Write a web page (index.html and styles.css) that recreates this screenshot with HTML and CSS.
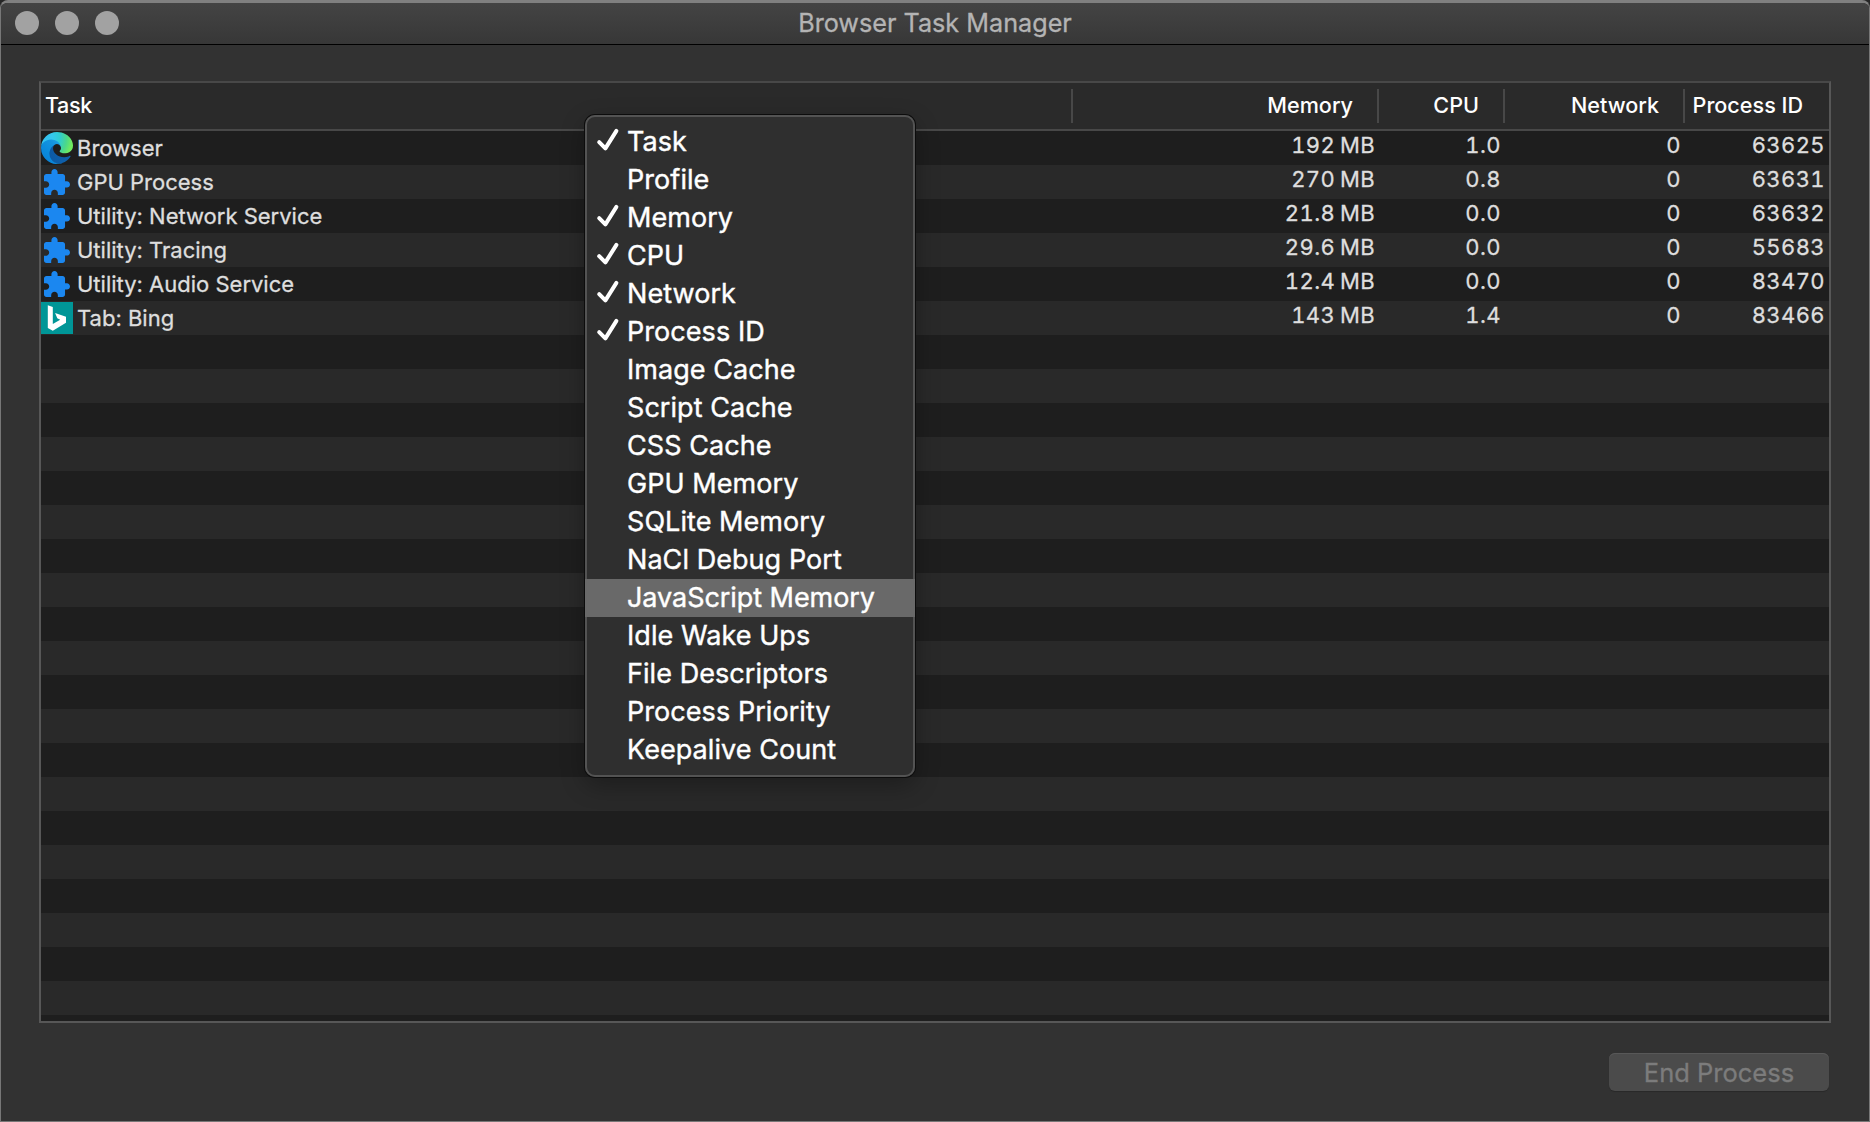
FILE: index.html
```html
<!DOCTYPE html>
<html lang="en">
<head>
<meta charset="utf-8">
<title>Browser Task Manager</title>
<link rel="stylesheet" href="styles.css">
</head>
<body>
<svg class="defs" aria-hidden="true">
  <symbol id="puzzle" viewBox="-0.42 -1.42 25.85 25.85">
    <path fill="#1b87f0" d="M20.5 11H19V7c0-1.1-.9-2-2-2h-4V3.5C13 2.12 11.88 1 10.5 1S8 2.12 8 3.5V5H4c-1.1 0-1.99.9-1.99 2v3.8H3.5c1.49 0 2.7 1.21 2.7 2.7s-1.21 2.7-2.7 2.7H2V20c0 1.1.9 2 2 2h3.8v-1.5c0-1.49 1.21-2.7 2.7-2.7 1.49 0 2.7 1.21 2.7 2.7V22H17c1.1 0 2-.9 2-2v-4h1.5c1.38 0 2.5-1.12 2.5-2.5S21.88 11 20.5 11z"/>
  </symbol>
  <symbol id="check" viewBox="0 0 24 24">
    <path fill="none" stroke="#fff" stroke-width="4" stroke-linecap="round" stroke-linejoin="round" d="M3.2 14.2 9.4 20.4 20.4 2.9"/>
  </symbol>
</svg>
<div class="window">
  <header class="titlebar">
    <div class="lights"><span class="light"></span><span class="light"></span><span class="light"></span></div>
    <h1 class="title">Browser Task Manager</h1>
  </header>
  <main class="content">
    <div class="table">
      <div class="head">
        <div class="th th-task">Task</div>
        <div class="th">Memory</div>
        <div class="th">CPU</div>
        <div class="th">Network</div>
        <div class="th">Process ID</div>
      </div>
      <div class="body">
        <div class="row">
          <div class="task">
            <svg class="icon" viewBox="0 0 256 256">
              <defs>
                <linearGradient id="e1" gradientUnits="userSpaceOnUse" x1="63" y1="177" x2="241" y2="177"><stop offset="0" stop-color="#0c59a4"/><stop offset="1" stop-color="#0f62ad"/></linearGradient>
                <linearGradient id="e2" gradientUnits="userSpaceOnUse" x1="153" y1="100" x2="46" y2="222"><stop offset="0" stop-color="#1b9de2"/><stop offset=".16" stop-color="#1595df"/><stop offset=".67" stop-color="#0a8bdc"/><stop offset="1" stop-color="#0a84d8"/></linearGradient>
                <radialGradient id="e3" gradientUnits="userSpaceOnUse" cx="26" cy="45" r="225"><stop offset="0" stop-color="#35c1f1"/><stop offset=".3" stop-color="#34c8ed"/><stop offset=".55" stop-color="#2fccd2"/><stop offset=".8" stop-color="#4bd88a"/><stop offset="1" stop-color="#70eb60"/></radialGradient>
              </defs>
              <path fill="url(#e1)" d="M231 190.5c-3.4 1.8-6.9 3.4-10.5 4.7a101 101 0 01-35.9 6.4c-47.3 0-88.5-32.5-88.5-74.3a31.5 31.5 0 0116.4-27.3c-42.8 1.8-53.8 46.4-53.8 72.5 0 74 68.1 81.4 82.8 81.4 7.9 0 19.8-2.3 27-4.6l1.3-.4a128.3 128.3 0 0066.6-52.8 4 4 0 00-5.4-5.6z"/>
              <path fill="url(#e2)" d="M105.7 241.4a79.2 79.2 0 01-22.7-21.3 80.7 80.7 0 0129.5-120c3.2-1.5 8.5-4.1 15.6-4a32.4 32.4 0 0125.7 13 31.9 31.9 0 016.3 18.7c0-.2 24.5-79.6-80-79.6-43.9 0-80 41.6-80 78.2a130.2 130.2 0 0012.1 56 128 128 0 00156.4 67 75.5 75.5 0 01-62.8-8z"/>
              <path fill="url(#e3)" d="M152.3 148.9c-.8 1-3.3 2.5-3.3 5.7 0 2.6 1.7 5.1 4.7 7.2 14.4 10 41.5 8.7 41.6 8.7 10.7 0 21.1-2.9 30.3-8.3A61.4 61.4 0 00256 109.1c.3-22.4-8-37.3-11.3-43.9C223.5 23.9 177.7 0 128 0A128 128 0 000 126.2c.5-36.5 36.8-66 80-66 3.5 0 23.5.3 42 10.1 16.3 8.6 24.9 18.9 30.8 29.2 6.2 10.7 7.3 24.1 7.3 29.5 0 5.3-2.7 13.3-7.8 19.9z"/>
            </svg>
            <span>Browser</span>
          </div>
          <div class="num">192 MB</div><div class="num">1.0</div><div class="num">0</div><div class="num">63625</div>
        </div>
        <div class="row">
          <div class="task"><svg class="icon"><use href="#puzzle"/></svg><span>GPU Process</span></div>
          <div class="num">270 MB</div><div class="num">0.8</div><div class="num">0</div><div class="num">63631</div>
        </div>
        <div class="row">
          <div class="task"><svg class="icon"><use href="#puzzle"/></svg><span>Utility: Network Service</span></div>
          <div class="num">21.8 MB</div><div class="num">0.0</div><div class="num">0</div><div class="num">63632</div>
        </div>
        <div class="row">
          <div class="task"><svg class="icon"><use href="#puzzle"/></svg><span>Utility: Tracing</span></div>
          <div class="num">29.6 MB</div><div class="num">0.0</div><div class="num">0</div><div class="num">55683</div>
        </div>
        <div class="row">
          <div class="task"><svg class="icon"><use href="#puzzle"/></svg><span>Utility: Audio Service</span></div>
          <div class="num">12.4 MB</div><div class="num">0.0</div><div class="num">0</div><div class="num">83470</div>
        </div>
        <div class="row">
          <div class="task">
            <svg class="icon" viewBox="0 0 32 32"><rect width="32" height="32" fill="#009697"/><path fill="#fff" d="M6.8 3.2 11.8 5v17l7.4-4.3-2.9-1.4-2.2-5.3L25 14.8v6L11.8 28.8 6.8 25.9z"/></svg>
            <span>Tab: Bing</span>
          </div>
          <div class="num">143 MB</div><div class="num">1.4</div><div class="num">0</div><div class="num">83466</div>
        </div>
      </div>
    </div>
    <button class="end" disabled>End Process</button>
  </main>
  <ul class="menu">
    <li><svg class="check"><use href="#check"/></svg>Task</li>
    <li>Profile</li>
    <li><svg class="check"><use href="#check"/></svg>Memory</li>
    <li><svg class="check"><use href="#check"/></svg>CPU</li>
    <li><svg class="check"><use href="#check"/></svg>Network</li>
    <li><svg class="check"><use href="#check"/></svg>Process ID</li>
    <li>Image Cache</li>
    <li>Script Cache</li>
    <li>CSS Cache</li>
    <li>GPU Memory</li>
    <li>SQLite Memory</li>
    <li>NaCl Debug Port</li>
    <li class="active">JavaScript Memory</li>
    <li>Idle Wake Ups</li>
    <li>File Descriptors</li>
    <li>Process Priority</li>
    <li>Keepalive Count</li>
  </ul>
</div>
</body>
</html>
```
FILE: styles.css
```css
* { box-sizing: border-box; }

body {
  margin: 0;
  background: #262626;
  font-family: Inter, "Liberation Sans", sans-serif;
}

.defs { display: none; }

.window {
  position: relative;
  display: flex;
  flex-direction: column;
  width: 1870px;
  height: 1122px;
  border: 1px solid #777;
  border-top: 3px solid #808080;
  border-radius: 8px 8px 0 0;
  background: #323232;
  overflow: hidden;
}

.titlebar {
  display: grid;
  grid-template-columns: 1fr auto 1fr;
  align-items: center;
  flex: none;
  height: 42px;
  padding: 0 14px;
  border-bottom: 1px solid #000;
  background: linear-gradient(#444, #373737);
}

.lights { display: flex; gap: 16px; margin-top: -1px; }
.light { width: 24px; height: 24px; border-radius: 50%; background: #a2a2a2; }

.title {
  margin: 0;
  color: #b4b4b4;
  font-size: 25.2px;
  font-weight: 400;
  line-height: 41px;
  -webkit-text-stroke: 0.3px;
}

.content {
  display: flex;
  flex-direction: column;
  flex: 1;
  align-items: flex-end;
  gap: 30px;
  padding: 36px 38px 0;
}

.table {
  display: flex;
  flex-direction: column;
  width: 1792px;
  height: 942px;
  border: 2px solid #575757;
  border-top-color: #484848;
}

.head, .row {
  display: grid;
  grid-template-columns: 1032px 306px 126px 180px 144px;
}

.head {
  flex: none;
  height: 48px;
  padding: 6px 0;
  border-bottom: 2px solid #484848;
  background: #2a2a2a;
}

.th {
  height: 34px;
  padding-right: 24px;
  border-right: 2px solid #484848;
  color: #fff;
  font-size: 21.6px;
  font-weight: 500;
  line-height: 32px;
  text-align: right;
}
.th:last-child { border-right-color: transparent; }
.th-task { padding-left: 4px; text-align: left; letter-spacing: -0.4px; }

.body {
  flex: 1;
  background: repeating-linear-gradient(#1e1e1e 0 34px, #292929 34px 68px);
}

.row { height: 34px; color: #dedede; font-size: 22px; -webkit-text-stroke: 0.3px; }

.task { display: flex; gap: 4px; line-height: 34px; }
.icon { width: 32px; height: 32px; margin-top: 1px; }

.num {
  padding-right: 4px;
  font-feature-settings: "tnum";
  letter-spacing: 0.4px;
  word-spacing: -1.5px;
  line-height: 28px;
  text-align: right;
}

.end {
  width: 220px;
  height: 38px;
  margin: 0 2px 0 0;
  padding: 0;
  border: 0;
  border-radius: 6px;
  background: #4b4b4b;
  box-shadow: inset 0 1px 0 #585858, 0 1px 1px rgba(0, 0, 0, 0.2);
  color: #7c7c7c;
  font: 400 25.5px/39px Inter, "Liberation Sans", sans-serif;
  -webkit-text-stroke: 0.3px;
}

.menu {
  position: absolute;
  left: 584px;
  top: 112px;
  width: 330px;
  height: 662px;
  margin: 0;
  padding: 8px 0;
  border-radius: 10px;
  background: #2f2f2f;
  box-shadow: inset 0 0 0 2px #535353, 0 0 0 1px #0c0c0c, 0 8px 24px rgba(0, 0, 0, 0.3);
  color: #fff;
  font-size: 27px;
  line-height: 37px;
  letter-spacing: 0.06px;
  list-style: none;
  -webkit-text-stroke: 0.4px;
}

.menu li { position: relative; height: 38px; padding-left: 42px; }
.menu .active { background: #696969; letter-spacing: -0.06px; }
.check { position: absolute; left: 11px; top: 5px; width: 24px; height: 24px; }
```
